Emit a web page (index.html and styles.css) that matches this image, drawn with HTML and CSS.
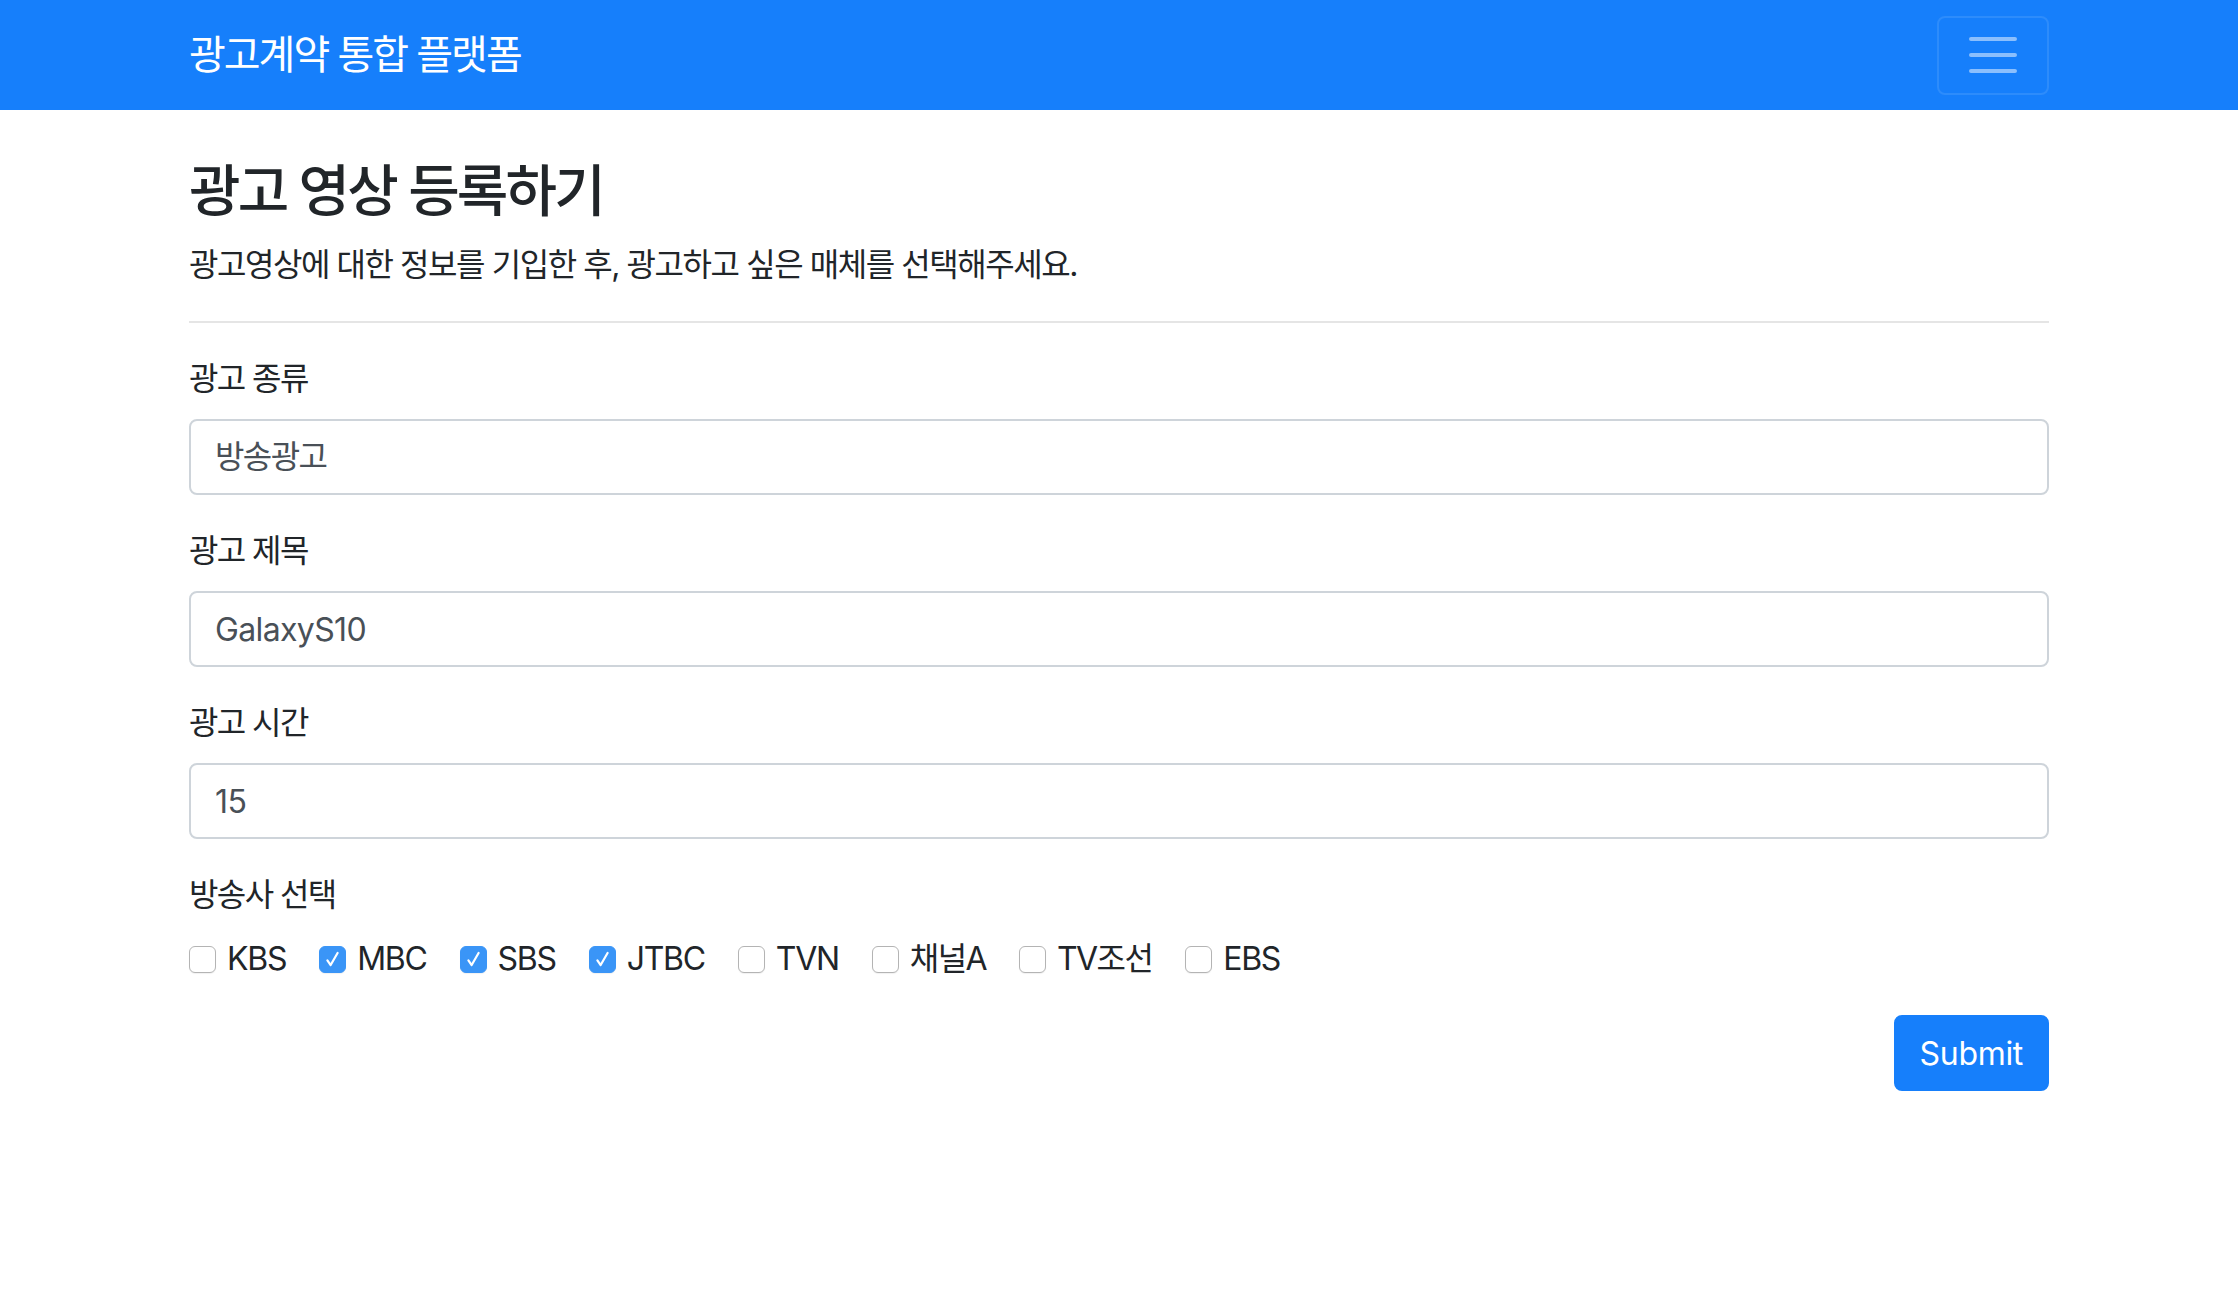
FILE: index.html
```html
<!DOCTYPE html>
<html lang="ko">
<head>
<meta charset="utf-8">
<title>광고계약 통합 플랫폼</title>
<link rel="stylesheet" href="styles.css">
</head>
<body>
<nav class="navbar">
  <div class="nav-inner">
    <a class="brand ko" href="#">광고계약 통합 플랫폼</a>
    <button class="toggler" type="button" aria-label="menu">
      <svg class="toggler-icon" viewBox="0 0 30 30" width="60" height="60">
        <path d="M4 7h22M4 15h22M4 23h22" stroke="rgba(255,255,255,0.5)" stroke-width="2" stroke-linecap="round" fill="none"/>
      </svg>
    </button>
  </div>
</nav>
<main class="container">
  <h1 class="title ko">광고 영상 등록하기</h1>
  <p class="lead ko">광고영상에 대한 정보를 기입한 후, 광고하고 싶은 매체를 선택해주세요.</p>
  <hr class="divider">
  <form class="form">
    <div class="group">
      <label class="label ko">광고 종류</label>
      <input class="field ko" type="text" value="방송광고">
    </div>
    <div class="group">
      <label class="label ko">광고 제목</label>
      <input class="field" type="text" value="GalaxyS10">
    </div>
    <div class="group">
      <label class="label ko">광고 시간</label>
      <input class="field" type="text" value="15">
    </div>
    <div class="group">
      <label class="label ko">방송사 선택</label>
      <div class="checks">
        <label class="check"><input type="checkbox" class="box"><span>KBS</span></label>
        <label class="check"><input type="checkbox" class="box" checked><span>MBC</span></label>
        <label class="check"><input type="checkbox" class="box" checked><span>SBS</span></label>
        <label class="check"><input type="checkbox" class="box" checked><span>JTBC</span></label>
        <label class="check"><input type="checkbox" class="box"><span>TVN</span></label>
        <label class="check"><input type="checkbox" class="box"><span class="ko-mix">채널A</span></label>
        <label class="check"><input type="checkbox" class="box"><span class="ko-mix">TV조선</span></label>
        <label class="check"><input type="checkbox" class="box"><span>EBS</span></label>
      </div>
    </div>
    <div class="actions">
      <button class="submit" type="button">Submit</button>
    </div>
  </form>
</main>
</body>
</html>
```

FILE: styles.css
```css
* { box-sizing: border-box; }

html, body {
  margin: 0;
  padding: 0;
  background: #ffffff;
}

body {
  font-family: Inter, "Noto Sans CJK KR", sans-serif;
  font-size: 32px;
  line-height: 48px;
  color: #212529;
  letter-spacing: -0.02em;
}

.ko { letter-spacing: -0.05em; }
.ko-mix { letter-spacing: -0.05em; }

.navbar {
  background: #167ffb;
  height: 110px;
}

.nav-inner {
  max-width: 1860px;
  margin: 0 auto;
  height: 100%;
  display: flex;
  align-items: center;
  justify-content: space-between;
}

.brand {
  color: #ffffff;
  text-decoration: none;
  font-size: 40px;
  line-height: 60px;
  font-weight: 400;
  letter-spacing: -0.05em;
}

.toggler {
  width: 112px;
  height: 79px;
  padding: 0;
  margin: 0;
  background: transparent;
  border: 2px solid rgba(255, 255, 255, 0.1);
  border-radius: 8px;
  display: flex;
  align-items: center;
  justify-content: center;
}

.toggler-icon { display: block; }

.container {
  max-width: 1860px;
  margin: 0 auto;
  padding-top: 48px;
}

.title {
  margin: 0 0 16px 0;
  font-size: 56px;
  line-height: 67px;
  font-weight: 500;
  color: #212529;
}

.lead {
  margin: 0 0 32px 0;
  font-size: 32px;
  line-height: 48px;
  letter-spacing: -0.045em;
}

.divider {
  margin: 32px 0;
  border: 0;
  border-top: 2px solid rgba(0, 0, 0, 0.1);
  height: 0;
}

.form { margin: 0; }

.group {
  display: flex;
  flex-direction: column;
  margin-bottom: 32px;
}

.label {
  display: block;
  margin-bottom: 16px;
  font-size: 32px;
  line-height: 48px;
}

.field {
  width: 100%;
  height: 76px;
  padding: 0 24px;
  font-family: Inter, "Noto Sans CJK KR", sans-serif;
  font-size: 32px;
  letter-spacing: -0.02em;
  color: #495057;
  background: #ffffff;
  border: 2px solid #ced4da;
  border-radius: 8px;
  outline: none;
}

.field.ko {
  letter-spacing: -0.05em;
  padding-bottom: 7px;
}

.checks {
  display: flex;
  align-items: center;
  column-gap: 33px;
  height: 48px;
}

.check {
  display: inline-flex;
  align-items: center;
  column-gap: 11px;
  font-size: 32px;
  line-height: 48px;
  letter-spacing: -0.04em;
}

.box {
  -webkit-appearance: none;
  appearance: none;
  width: 27px;
  height: 27px;
  margin: 0;
  border: 1.5px solid #b4b4b4;
  border-radius: 6px;
  background: #ffffff;
  box-shadow: 0 1px 1px rgba(0, 0, 0, 0.06);
}

.box:checked {
  border-color: #3a95f7;
  background-color: #3a95f7;
  background-image: url("data:image/svg+xml,%3Csvg xmlns='http://www.w3.org/2000/svg' viewBox='0 0 27 27'%3E%3Cpath d='M8 14.5 L11.5 19.5 L19 6.5' fill='none' stroke='white' stroke-width='2.4' stroke-linecap='round' stroke-linejoin='round'/%3E%3C/svg%3E");
  background-size: 100% 100%;
}

.actions {
  display: flex;
  justify-content: flex-end;
}

.submit {
  height: 76px;
  padding: 0 24px;
  font-family: Inter, "Noto Sans CJK KR", sans-serif;
  font-size: 32px;
  font-weight: 400;
  letter-spacing: -0.01em;
  color: #ffffff;
  background: #167ffb;
  border: 2px solid #167ffb;
  border-radius: 8px;
}
```
